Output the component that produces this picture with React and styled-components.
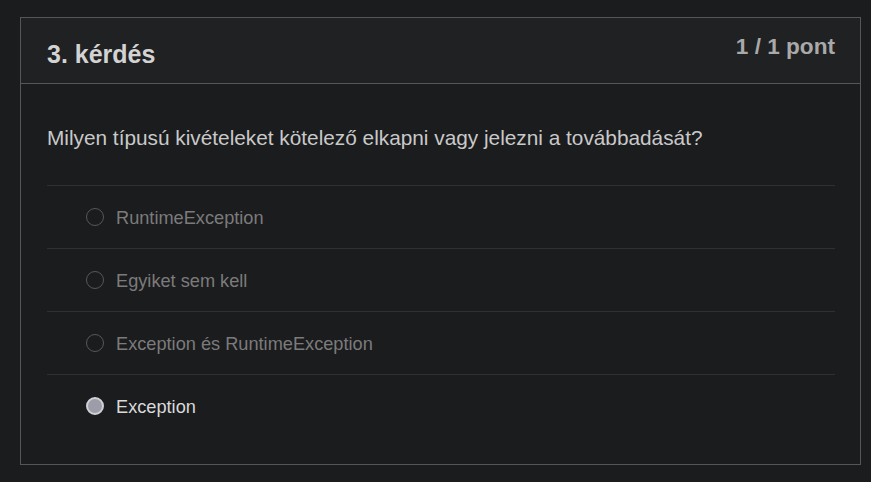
import styled, { createGlobalStyle } from "styled-components";

const GlobalStyle = createGlobalStyle`
  html, body {
    margin: 0;
    background: #1b1c1e;
    font-family: "Liberation Sans", Arial, sans-serif;
  }
`;

const Page = styled.div`
  padding: 17px 10px 17px 20px;
`;

const Card = styled.section`
  border: 1px solid #545659;
  background: #1b1c1e;
`;

const Header = styled.header`
  display: flex;
  justify-content: space-between;
  align-items: flex-start;
  height: 66px;
  box-sizing: border-box;
  padding: 15px 25px 0 26px;
  background: #202123;
  border-bottom: 1px solid #545659;
`;

const Title = styled.h2`
  margin: 6px 0 0;
  font-size: 25px;
  line-height: 1.2;
  font-weight: bold;
  color: #d3d3d3;
`;

const Points = styled.span`
  font-size: 22.6px;
  line-height: 1.2;
  font-weight: bold;
  color: #a9a9a9;
`;

const Body = styled.div`
  padding: 0 25px 27px 26px;
`;

const Question = styled.p`
  margin: 0;
  padding: 40px 0 34px;
  font-size: 20.8px;
  line-height: 27px;
  color: #c9c9c9;
`;

const Option = styled.label`
  display: flex;
  align-items: center;
  gap: 12px;
  height: 62px;
  padding-left: 39px;
  border-top: 1px solid #2f3033;
  font-size: 18.2px;
  color: ${(p) => (p.$checked ? "#dadada" : "#7b7b7b")};
`;

const OptionText = styled.span`
  padding-top: 2px;
`;

const Radio = styled.span`
  width: 18px;
  height: 18px;
  box-sizing: border-box;
  border-radius: 50%;
  border: ${(p) => (p.$checked ? "2px solid #d0d0d6" : "1px solid #55575b")};
  background: ${(p) => (p.$checked ? "#9d9daa" : "transparent")};
  flex-shrink: 0;
`;

const options = [
  { text: "RuntimeException" },
  { text: "Egyiket sem kell" },
  { text: "Exception és RuntimeException" },
  { text: "Exception", checked: true },
];

export default function App() {
  return (
    <>
      <GlobalStyle />
      <Page>
        <Card>
          <Header>
            <Title>3. kérdés</Title>
            <Points>1 / 1 pont</Points>
          </Header>
          <Body>
            <Question>
              Milyen típusú kivételeket kötelező elkapni vagy jelezni a továbbadását?
            </Question>
            {options.map((o) => (
              <Option key={o.text} $checked={o.checked}>
                <Radio $checked={o.checked} />
                <OptionText>{o.text}</OptionText>
              </Option>
            ))}
          </Body>
        </Card>
      </Page>
    </>
  );
}
